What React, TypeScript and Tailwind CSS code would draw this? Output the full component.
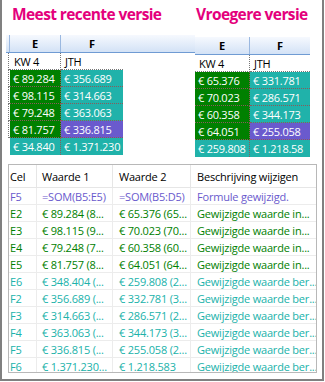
import React from "react";

type Cell = { text: string; bg: string };

const leftRows: Cell[][] = [
  [
    { text: "€ 89.284", bg: "bg-[#008000]" },
    { text: "€ 356.689", bg: "bg-[#20b2aa]" },
  ],
  [
    { text: "€ 98.115", bg: "bg-[#008000]" },
    { text: "€ 314.663", bg: "bg-[#20b2aa]" },
  ],
  [
    { text: "€ 79.248", bg: "bg-[#008000]" },
    { text: "€ 363.063", bg: "bg-[#20b2aa]" },
  ],
  [
    { text: "€ 81.757", bg: "bg-[#008000]" },
    { text: "€ 336.815", bg: "bg-[#6a5acd]" },
  ],
  [
    { text: "€ 34.840", bg: "bg-[#20b2aa]" },
    { text: "€ 1.371.230", bg: "bg-[#20b2aa]" },
  ],
];

const rightRows: Cell[][] = [
  [
    { text: "€ 65.376", bg: "bg-[#008000]" },
    { text: "€ 331.781", bg: "bg-[#20b2aa]" },
  ],
  [
    { text: "€ 70.023", bg: "bg-[#008000]" },
    { text: "€ 286.571", bg: "bg-[#20b2aa]" },
  ],
  [
    { text: "€ 60.358", bg: "bg-[#008000]" },
    { text: "€ 344.173", bg: "bg-[#20b2aa]" },
  ],
  [
    { text: "€ 64.051", bg: "bg-[#008000]" },
    { text: "€ 255.058", bg: "bg-[#6a5acd]" },
  ],
  [
    { text: "€ 259.808", bg: "bg-[#20b2aa]" },
    { text: "€ 1.218.58", bg: "bg-[#20b2aa]" },
  ],
];

const changes = [
  { cel: "F5", w1: "=SOM(B5:E5)", w2: "=SOM(B5:D5)", desc: "Formule gewijzigd.", color: "text-[#6a5acd]" },
  { cel: "E2", w1: "€ 89.284 (8...", w2: "€ 65.376 (65...", desc: "Gewijzigde waarde in...", color: "text-[#008000]" },
  { cel: "E3", w1: "€ 98.115 (9...", w2: "€ 70.023 (70...", desc: "Gewijzigde waarde in...", color: "text-[#008000]" },
  { cel: "E4", w1: "€ 79.248 (7...", w2: "€ 60.358 (60...", desc: "Gewijzigde waarde in...", color: "text-[#008000]" },
  { cel: "E5", w1: "€ 81.757 (8...", w2: "€ 64.051 (64...", desc: "Gewijzigde waarde in...", color: "text-[#008000]" },
  { cel: "E6", w1: "€ 348.404 (...", w2: "€ 259.808 (2...", desc: "Gewijzigde waarde ber...", color: "text-[#20b2aa]" },
  { cel: "F2", w1: "€ 356.689 (...", w2: "€ 332.781 (3...", desc: "Gewijzigde waarde ber...", color: "text-[#20b2aa]" },
  { cel: "F3", w1: "€ 314.663 (...", w2: "€ 286.571 (2...", desc: "Gewijzigde waarde ber...", color: "text-[#20b2aa]" },
  { cel: "F4", w1: "€ 363.063 (...", w2: "€ 344.173 (3...", desc: "Gewijzigde waarde ber...", color: "text-[#20b2aa]" },
  { cel: "F5", w1: "€ 336.815 (...", w2: "€ 255.058 (2...", desc: "Gewijzigde waarde ber...", color: "text-[#20b2aa]" },
  { cel: "F6", w1: "€ 1.371.230...", w2: "€ 1.218.583", desc: "Gewijzigde waarde ber...", color: "text-[#20b2aa]" },
];

const Sheet = ({
  rows,
  wE,
  wF,
  stub,
}: {
  rows: Cell[][];
  wE: string;
  wF: string;
  stub?: boolean;
}) => (
  <div className="flex flex-col text-[11px] leading-none tracking-[-0.25px]">
    {/* kolomkoppen */}
    <div className="flex h-[18px] border-b border-[#6f9bd3] bg-gradient-to-b from-[#f6f9fe] to-[#d3e2f6]">
      {stub && <div className="w-[4px] border-r border-[#9ab8e0]" />}
      <div className={`${wE} flex items-center justify-center font-bold border-r border-[#9ab8e0]`}>E</div>
      <div className={`${wF} flex items-center justify-center font-bold`}>F</div>
    </div>
    <div className="flex h-[17px]">
      {stub && (
        <div className="w-[4px] pl-[2px]">
          <div className="h-full border-l border-b border-dotted border-[#777]" />
        </div>
      )}
      <div className={`${wE} flex items-center pl-[4px] border-r border-b border-dotted border-[#777]`}>KW 4</div>
      <div className={`${wF} flex items-center pl-[4px] border-b border-dotted border-[#777]`}>JTH</div>
    </div>
    {rows.map((row, i) => (
      <div key={i} className="flex h-[17px]">
        {stub && (
          <div className="w-[4px] pl-[2px]">
            {i < rows.length - 1 && <div className="h-full border-l border-b border-dotted border-[#777]" />}
          </div>
        )}
        {row.map((c, j) => (
          <div
            key={j}
            className={`${j === 0 ? wE : wF} ${c.bg} flex items-center pl-[3px] text-white whitespace-nowrap overflow-hidden ${
              i < rows.length - 1 ? "border-b border-dotted border-[#8a5a5a]" : ""
            } ${j === 0 ? "border-r border-dotted border-[#8a5a5a]" : ""}`}
          >
            {c.text}
          </div>
        ))}
      </div>
    ))}
  </div>
);

export default function App() {
  return (
    <div className="w-[325px] h-[382px] bg-white font-['Open_Sans',sans-serif] text-black">
      <div className="w-[324px] h-[381px] border-x-2 border-b-2 border-[#808080] flex flex-col">
        <div className="flex">
          <div className="w-[193px] pl-[4px] flex flex-col">
            <div className="h-[32px] pl-[6px] pt-[3px] text-[15.5px] font-bold tracking-[-0.6px] text-[#e4007c]">
              Meest recente versie
            </div>
            <div className="mt-[3px]">
              <Sheet rows={leftRows} wE="w-[51px]" wF="w-[62px]" stub />
            </div>
          </div>
          <div className="flex flex-col">
            <div className="h-[32px] pl-[1px] pt-[3px] text-[15.5px] font-bold tracking-[-0.6px] text-[#e4007c]">
              Vroegere versie
            </div>
            <div className="mt-[5px]">
              <Sheet rows={rightRows} wE="w-[55px]" wF="w-[60px]" />
            </div>
          </div>
        </div>
        <div className="ml-[6px] mt-[7px] w-[309px] h-[209px] border border-[#b8b8b8] overflow-hidden text-[11px] leading-none tracking-[-0.2px]">
          <div className="flex h-[23px] border-b border-[#e6e6e6]">
            <div className="w-[28px] pl-[1px] flex items-center border-r border-[#e6e6e6]">Cel</div>
            <div className="w-[76px] pl-[5px] flex items-center border-r border-[#e6e6e6]">Waarde 1</div>
            <div className="w-[78px] pl-[6px] flex items-center border-r border-[#e6e6e6]">Waarde 2</div>
            <div className="flex-1 pl-[6px] flex items-center">Beschrijving wijzigen</div>
          </div>
          {changes.map((r, i) => (
            <div key={i} className={`flex h-[17px] border-b border-[#ececec] ${r.color}`}>
              <div className="w-[28px] pl-[1px] flex items-center border-r border-[#ececec]">{r.cel}</div>
              <div className="w-[76px] pl-[5px] flex items-center border-r border-[#ececec] whitespace-nowrap overflow-hidden">{r.w1}</div>
              <div className="w-[78px] pl-[6px] flex items-center border-r border-[#ececec] whitespace-nowrap overflow-hidden">{r.w2}</div>
              <div className="flex-1 pl-[6px] flex items-center whitespace-nowrap overflow-hidden">{r.desc}</div>
            </div>
          ))}
        </div>
      </div>
    </div>
  );
}
